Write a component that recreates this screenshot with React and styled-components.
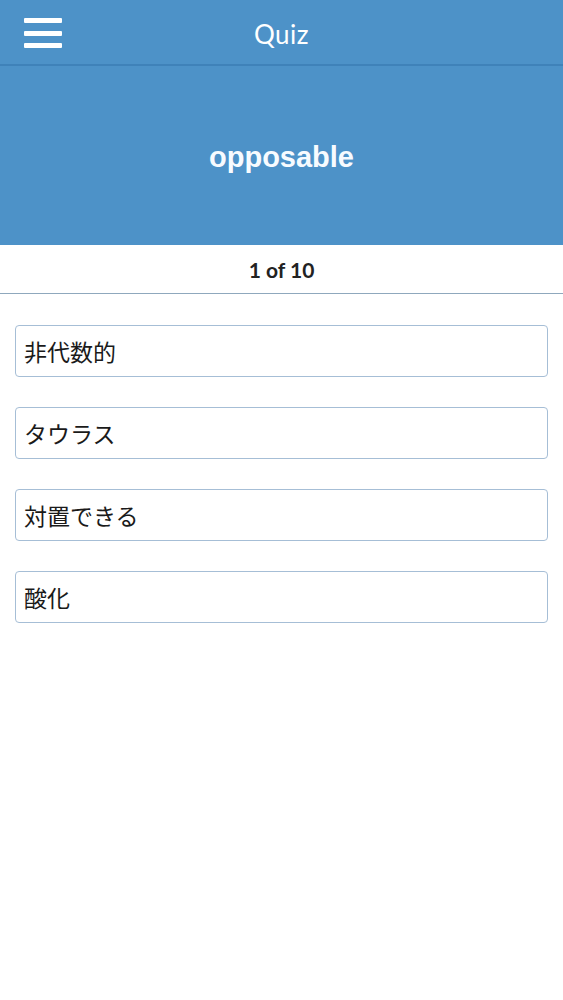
import React from 'react';
import styled, { createGlobalStyle } from "styled-components";

const GlobalStyle = createGlobalStyle`
  body {
    margin: 0;
    background: #fff;
    font-family: "Liberation Sans", "Noto Sans CJK JP", sans-serif;
  }
`;

const Page = styled.div`
  width: 563px;
  min-height: 1000px;
  background: #fff;
`;

const TopBar = styled.header`
  position: relative;
  height: 64px;
  background: #4d92c8;
  border-bottom: 2px solid #3f82b9;
  display: flex;
  align-items: center;
  justify-content: center;
`;

const MenuButton = styled.button`
  position: absolute;
  left: 24px;
  top: 18px;
  width: 38px;
  height: 30px;
  padding: 0;
  border: none;
  background: none;
  display: flex;
  flex-direction: column;
  justify-content: space-between;
  cursor: pointer;
`;

const MenuLine = styled.span`
  display: block;
  height: 5px;
  border-radius: 1px;
  background: #fff;
`;

const Title = styled.h1`
  margin: 0;
  padding-top: 4px;
  font-family: "Lato", "Open Sans", sans-serif;
  font-weight: 400;
  font-size: 26px;
  color: #fff;
  letter-spacing: 0.5px;
`;

const WordPanel = styled.section`
  height: 179px;
  background: #4d92c8;
  display: flex;
  align-items: center;
  justify-content: center;
`;

const Word = styled.h2`
  margin: 4px 0 0;
  font-family: "Liberation Sans", Arial, sans-serif;
  font-weight: 700;
  font-size: 29px;
  color: #f7fbff;
`;

const Counter = styled.div`
  height: 48px;
  border-bottom: 1px solid #8fa8bd;
  display: flex;
  align-items: center;
  justify-content: center;
  font-family: "Lato", "Open Sans", sans-serif;
  font-weight: 700;
  font-size: 21px;
  color: #222;
`;

const Options = styled.div`
  padding: 31px 15px 0;
  display: flex;
  flex-direction: column;
  gap: 30px;
`;

const Option = styled.button`
  height: 52px;
  padding: 0 8px;
  border: 1px solid #a6bed6;
  border-radius: 4px;
  background: #fff;
  text-align: left;
  font-family: "Noto Sans CJK JP", sans-serif;
  font-size: 23px;
  line-height: 1;
  color: #1a1a1a;
  cursor: pointer;
`;

const choices = ["非代数的", "タウラス", "対置できる", "酸化"];

const App = () =>
    <Page>
        <GlobalStyle/>
        <TopBar>
            <MenuButton aria-label="menu">
                <MenuLine/>
                <MenuLine/>
                <MenuLine/>
            </MenuButton>
            <Title>Quiz</Title>
        </TopBar>
        <WordPanel>
            <Word>opposable</Word>
        </WordPanel>
        <Counter>1 of 10</Counter>
        <Options>
            {choices.map((c, i) => <Option key={i}>{c}</Option>)}
        </Options>
    </Page>
;

export default App;
